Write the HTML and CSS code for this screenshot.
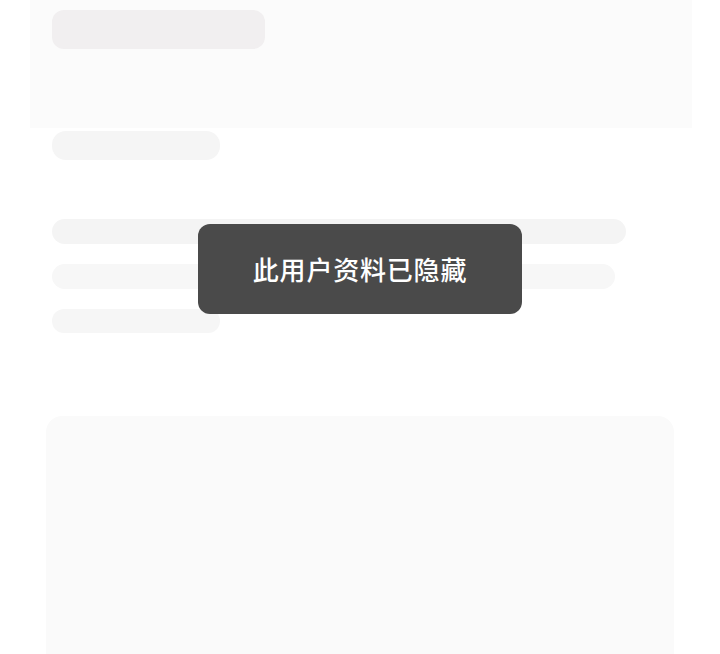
FILE: index.html
```html
<!DOCTYPE html>
<html lang="zh-CN">
<head>
<meta charset="utf-8">
<title>用户资料</title>
<link rel="stylesheet" href="styles.css">
</head>
<body>
  <div class="page">
    <header class="profile-head">
      <div class="name-block"></div>
    </header>
    <div class="line line-short line-tag"></div>
    <section class="bio">
      <div class="line line-a"></div>
      <div class="line line-b"></div>
      <div class="line line-short"></div>
    </section>
    <section class="panel"></section>
  </div>
  <div class="toast">此用户资料已隐藏</div>
</body>
</html>
```

FILE: styles.css
```css
html, body {
  margin: 0;
  padding: 0;
  background: #ffffff;
  height: 100%;
  overflow: hidden;
}

.page {
  display: flex;
  flex-direction: column;
  width: 720px;
}

.profile-head {
  margin: 0 28px 0 30px;
  height: 128px;
  background: #fbfbfb;
  padding: 10px 0 0 22px;
  box-sizing: border-box;
}

.name-block {
  width: 213px;
  height: 39px;
  border-radius: 12px;
  background: #f1eff0;
}

.line {
  margin-left: 52px;
  border-radius: 14px;
  background: #f6f6f6;
  height: 25px;
}

.line-tag {
  margin-top: 3px;
  height: 29px;
  background: #f5f5f5;
}

.line-short {
  width: 168px;
}

.bio {
  display: flex;
  flex-direction: column;
  gap: 20px;
  margin-top: 59px;
}

.line-a {
  width: 574px;
  background: #f4f4f4;
}

.line-b {
  width: 563px;
  background: #f7f7f7;
}

.bio .line-short {
  height: 24px;
}

.panel {
  margin: 83px 0 0 46px;
  width: 628px;
  height: 238px;
  border-radius: 16px 16px 0 0;
  background: #fafafa;
}

.toast {
  position: absolute;
  left: 198px;
  top: 224px;
  width: 324px;
  height: 90px;
  border-radius: 12px;
  background: #4a4a4a;
  color: #ffffff;
  font-family: "Noto Sans CJK SC", "Noto Sans", sans-serif;
  font-size: 26px;
  font-weight: 500;
  display: flex;
  align-items: center;
  justify-content: center;
  letter-spacing: 0.8px;
  padding-bottom: 2px;
  box-sizing: border-box;
}
```
